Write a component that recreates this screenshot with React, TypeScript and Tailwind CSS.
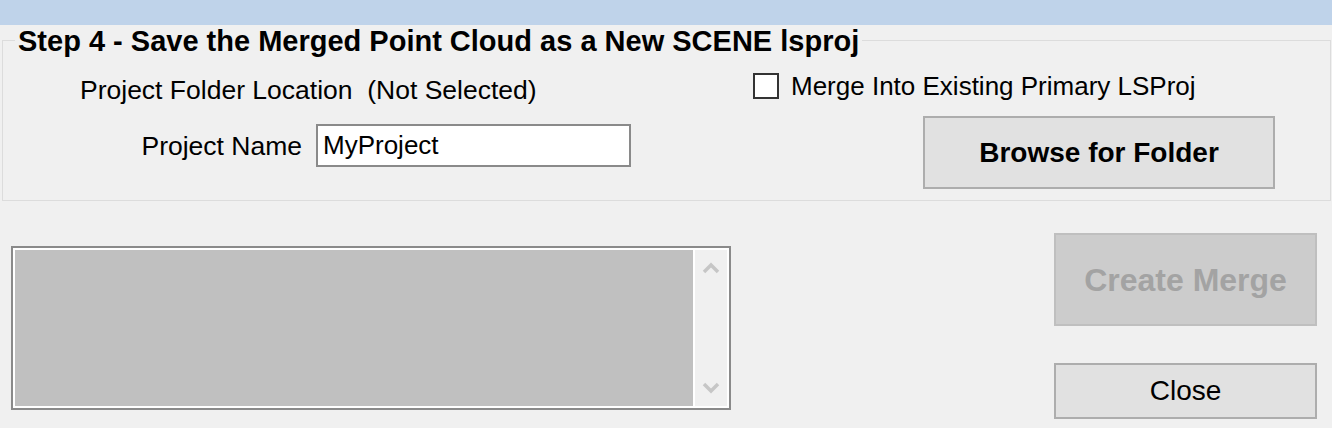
import React from "react";

const Chevron = ({ up }: { up?: boolean }) => (
  <svg width="18" height="12" viewBox="0 0 18 12" fill="none">
    <polyline
      points={up ? "2,10 9,3 16,10" : "2,2 9,9 16,2"}
      stroke="#c6c6c6"
      strokeWidth="3.5"
      strokeLinejoin="miter"
    />
  </svg>
);

const App = () => {
  return (
    <div className="w-[1332px] h-[428px] overflow-hidden bg-[#f0f0f0] font-['Liberation_Sans',Arial,sans-serif] text-black flex flex-col">
      {/* title bar strip */}
      <div className="h-[25px] bg-[#bfd3ea] shrink-0" />

      {/* step 4 group */}
      <fieldset className="ml-[2px] mr-[1px] h-[176px] border border-[#dcdcdc] shrink-0">
        <legend className="ml-[12px] px-[3px] pt-[2px] text-[29px] leading-[28px] font-bold">
          Step 4 - Save the Merged Point Cloud as a New SCENE lsproj
        </legend>

        <div className="flex">
          {/* left side */}
          <div className="w-[750px] flex flex-col">
            <div className="mt-[20px] pl-[77px] text-[26.5px] leading-[30px] whitespace-pre">
              Project Folder Location  (Not Selected)
            </div>
            <div className="mt-[19px] flex items-center">
              <span className="w-[299px] text-right text-[26.5px] leading-[30px]">
                Project Name
              </span>
              <input
                defaultValue="MyProject"
                className="ml-[14px] w-[315px] h-[43px] border-2 border-[#8a8a8a] bg-white pl-[5px] text-[26px] leading-[30px] outline-none"
              />
            </div>
          </div>

          {/* right side */}
          <div className="flex flex-col">
            <label className="mt-[16px] flex items-center">
              <span className="w-[26px] h-[26px] border-2 border-[#333333] bg-white" />
              <span className="ml-[12px] text-[26px] leading-[30px]">
                Merge Into Existing Primary LSProj
              </span>
            </label>
            <button className="mt-[15px] ml-[170px] w-[352px] h-[73px] bg-[#e1e1e1] border-2 border-[#adadad] text-[28px] font-bold">
              Browse for Folder
            </button>
          </div>
        </div>
      </fieldset>

      {/* output + actions */}
      <div className="flex pl-[11px] pr-[15px]">
        <div className="mt-[45px] w-[720px] h-[164px] border-2 border-[#8a8a8a] bg-white p-[2px] flex gap-[2px]">
          <div className="flex-1 bg-[#c0c0c0]" />
          <div className="w-[32px] bg-[#f0f0f0] flex flex-col items-center justify-between pt-[12px] pb-[12px]">
            <Chevron up />
            <Chevron />
          </div>
        </div>

        <div className="ml-auto w-[263px] flex flex-col">
          <button
            disabled
            className="mt-[32px] h-[93px] bg-[#cccccc] border-2 border-[#bfbfbf] text-[32px] font-bold text-[#a3a3a3]"
          >
            Create Merge
          </button>
          <button className="mt-[37px] h-[56px] bg-[#e1e1e1] border-2 border-[#adadad] text-[28px]">
            Close
          </button>
        </div>
      </div>
    </div>
  );
};

export default App;
